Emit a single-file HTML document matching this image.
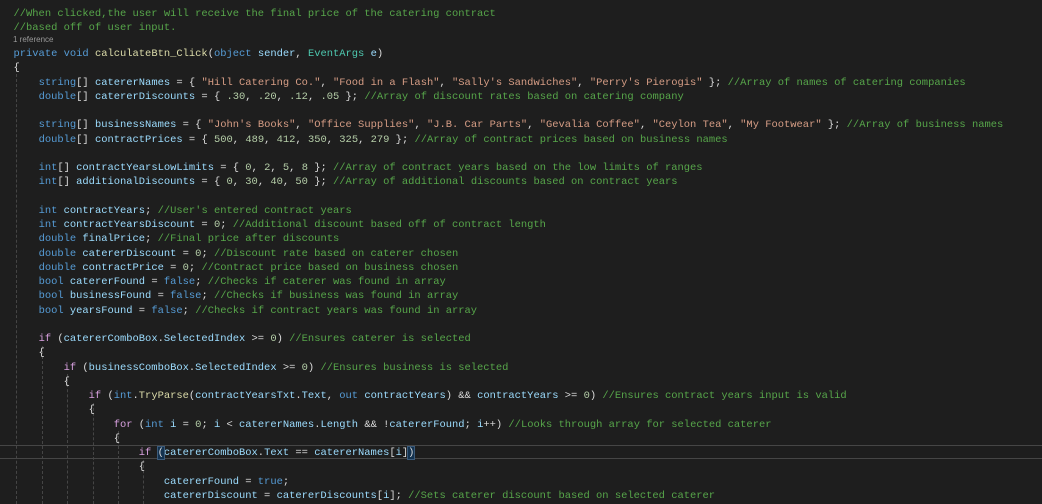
<!DOCTYPE html>
<html><head><meta charset="utf-8"><style>
html,body{margin:0;padding:0;background:#1e1e1e;width:1042px;height:503px;overflow:hidden}
.c{position:absolute;left:13.5px;font-family:"Liberation Mono",monospace;font-size:10.45px;color:#dcdcdc;white-space:pre;line-height:14.25px}
.l{height:14.25px}
.k{color:#569cd6}.f{color:#d8a0df}.v{color:#9cdcfe}.m{color:#dcdcaa}.t{color:#4ec9b0}.s{color:#d69d85}.n{color:#b5cea8}.g{color:#57a64a}.p{color:#b4b4b4}
.lens{position:absolute;left:13px;top:35px;font-family:"Liberation Sans",sans-serif;font-size:8px;color:#999}
.gd{position:absolute;width:0;border-left:1px dashed #454545}
.cur{position:absolute;left:0;width:1042px;top:445px;height:12px;border-top:1px solid #464646;border-bottom:1px solid #464646}
.br{outline:1px solid #3b5a7a;background:#13324f}
</style></head><body>
<div class="cur"></div>
<div class="gd" style="left:16px;top:74px;height:430px"></div>
<div class="gd" style="left:42px;top:346px;height:158px"></div>
<div class="gd" style="left:67px;top:374px;height:130px"></div>
<div class="gd" style="left:93px;top:403px;height:101px"></div>
<div class="gd" style="left:118px;top:431px;height:73px"></div>
<div class="gd" style="left:143px;top:460px;height:44px"></div>
<div class="c" style="top:6.5px"><div class="l g">//When clicked,the user will receive the final price of the catering contract</div><div class="l g">//based off of user input.</div></div>
<div class="lens">1 reference</div>
<div class="c" style="top:47px"><div class="l"><span class="k">private</span> <span class="k">void</span> <span class="m">calculateBtn_Click</span>(<span class="k">object</span> <span class="v">sender</span>, <span class="t">EventArgs</span> <span class="v">e</span>)</div><div class="l">{</div><div class="l">    <span class="k">string</span>[] <span class="v">catererNames</span> = { <span class="s">"Hill Catering Co."</span>, <span class="s">"Food in a Flash"</span>, <span class="s">"Sally's Sandwiches"</span>, <span class="s">"Perry's Pierogis"</span> }; <span class="g">//Array of names of catering companies</span></div><div class="l">    <span class="k">double</span>[] <span class="v">catererDiscounts</span> = { <span class="n">.30</span>, <span class="n">.20</span>, <span class="n">.12</span>, <span class="n">.05</span> }; <span class="g">//Array of discount rates based on catering company</span></div><div class="l"> </div><div class="l">    <span class="k">string</span>[] <span class="v">businessNames</span> = { <span class="s">"John's Books"</span>, <span class="s">"Office Supplies"</span>, <span class="s">"J.B. Car Parts"</span>, <span class="s">"Gevalia Coffee"</span>, <span class="s">"Ceylon Tea"</span>, <span class="s">"My Footwear"</span> }; <span class="g">//Array of business names</span></div><div class="l">    <span class="k">double</span>[] <span class="v">contractPrices</span> = { <span class="n">500</span>, <span class="n">489</span>, <span class="n">412</span>, <span class="n">350</span>, <span class="n">325</span>, <span class="n">279</span> }; <span class="g">//Array of contract prices based on business names</span></div><div class="l"> </div><div class="l">    <span class="k">int</span>[] <span class="v">contractYearsLowLimits</span> = { <span class="n">0</span>, <span class="n">2</span>, <span class="n">5</span>, <span class="n">8</span> }; <span class="g">//Array of contract years based on the low limits of ranges</span></div><div class="l">    <span class="k">int</span>[] <span class="v">additionalDiscounts</span> = { <span class="n">0</span>, <span class="n">30</span>, <span class="n">40</span>, <span class="n">50</span> }; <span class="g">//Array of additional discounts based on contract years</span></div><div class="l"> </div><div class="l">    <span class="k">int</span> <span class="v">contractYears</span>; <span class="g">//User's entered contract years</span></div><div class="l">    <span class="k">int</span> <span class="v">contractYearsDiscount</span> = <span class="n">0</span>; <span class="g">//Additional discount based off of contract length</span></div><div class="l">    <span class="k">double</span> <span class="v">finalPrice</span>; <span class="g">//Final price after discounts</span></div><div class="l">    <span class="k">double</span> <span class="v">catererDiscount</span> = <span class="n">0</span>; <span class="g">//Discount rate based on caterer chosen</span></div><div class="l">    <span class="k">double</span> <span class="v">contractPrice</span> = <span class="n">0</span>; <span class="g">//Contract price based on business chosen</span></div><div class="l">    <span class="k">bool</span> <span class="v">catererFound</span> = <span class="k">false</span>; <span class="g">//Checks if caterer was found in array</span></div><div class="l">    <span class="k">bool</span> <span class="v">businessFound</span> = <span class="k">false</span>; <span class="g">//Checks if business was found in array</span></div><div class="l">    <span class="k">bool</span> <span class="v">yearsFound</span> = <span class="k">false</span>; <span class="g">//Checks if contract years was found in array</span></div><div class="l"> </div><div class="l">    <span class="f">if</span> (<span class="v">catererComboBox</span>.<span class="v">SelectedIndex</span> &gt;= <span class="n">0</span>) <span class="g">//Ensures caterer is selected</span></div><div class="l">    {</div><div class="l">        <span class="f">if</span> (<span class="v">businessComboBox</span>.<span class="v">SelectedIndex</span> &gt;= <span class="n">0</span>) <span class="g">//Ensures business is selected</span></div><div class="l">        {</div><div class="l">            <span class="f">if</span> (<span class="k">int</span>.<span class="m">TryParse</span>(<span class="v">contractYearsTxt</span>.<span class="v">Text</span>, <span class="k">out</span> <span class="v">contractYears</span>) &amp;&amp; <span class="v">contractYears</span> &gt;= <span class="n">0</span>) <span class="g">//Ensures contract years input is valid</span></div><div class="l">            {</div><div class="l">                <span class="f">for</span> (<span class="k">int</span> <span class="v">i</span> = <span class="n">0</span>; <span class="v">i</span> &lt; <span class="v">catererNames</span>.<span class="v">Length</span> &amp;&amp; !<span class="v">catererFound</span>; <span class="v">i</span>++) <span class="g">//Looks through array for selected caterer</span></div><div class="l">                {</div><div class="l">                    <span class="f">if</span> <span class="br">(</span><span class="v">catererComboBox</span>.<span class="v">Text</span> == <span class="v">catererNames</span>[<span class="v">i</span>]<span class="br">)</span></div><div class="l">                    {</div><div class="l">                        <span class="v">catererFound</span> = <span class="k">true</span>;</div><div class="l">                        <span class="v">catererDiscount</span> = <span class="v">catererDiscounts</span>[<span class="v">i</span>]; <span class="g">//Sets caterer discount based on selected caterer</span></div></div>
</body></html>
